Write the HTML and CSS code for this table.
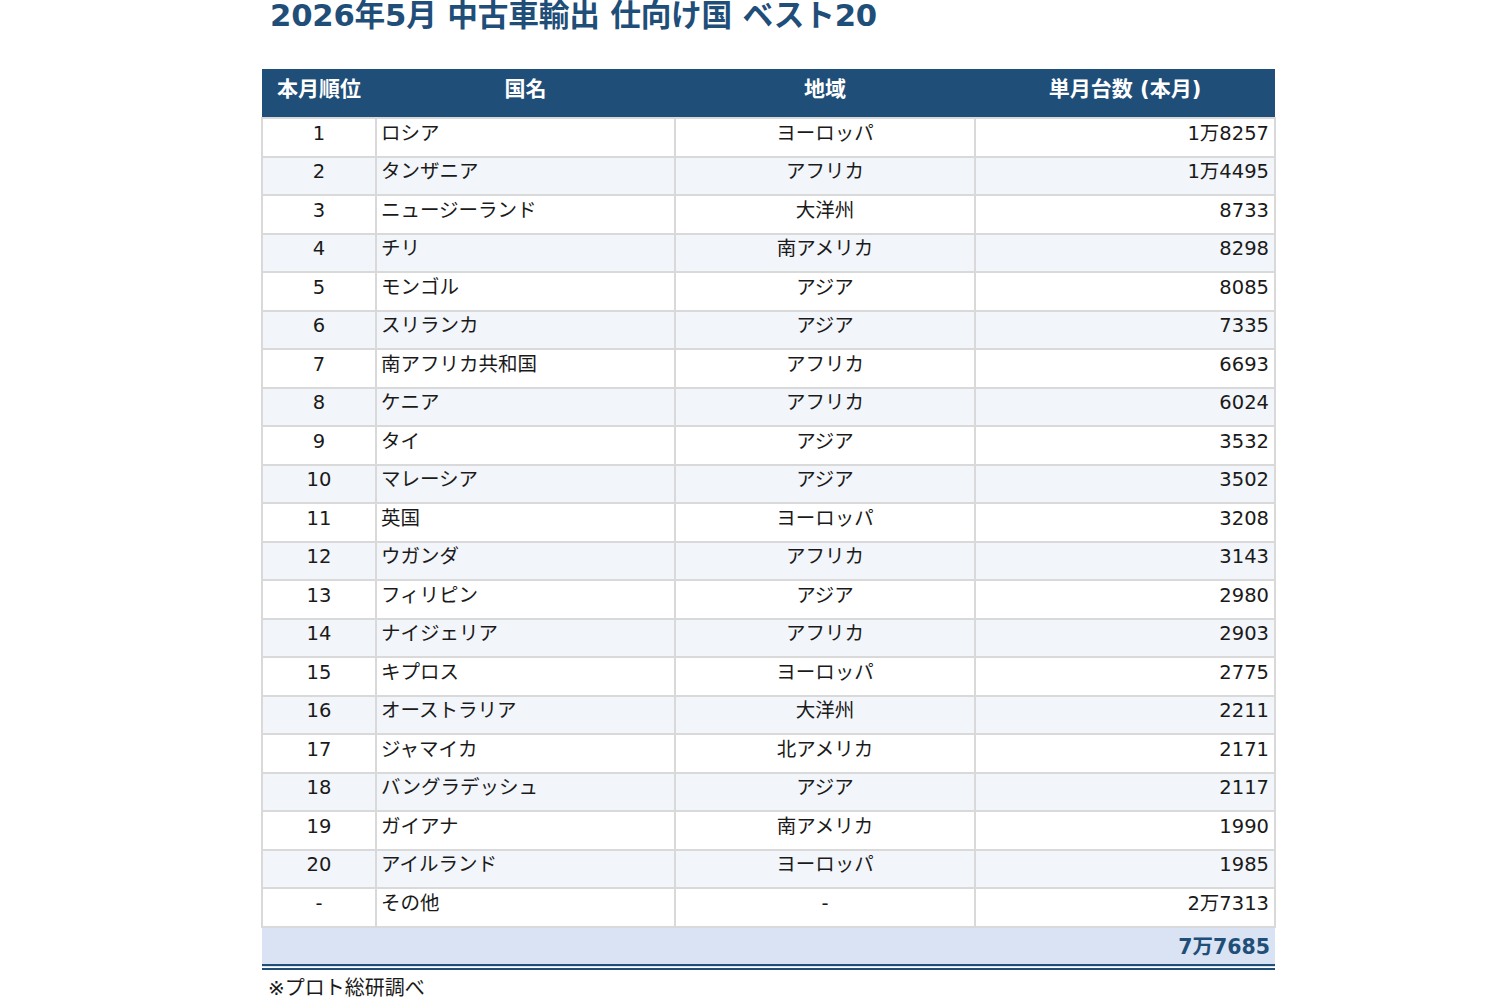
FILE: index.html
```html
<!DOCTYPE html>
<html lang="ja">
<head>
<meta charset="utf-8">
<link rel="stylesheet" href="styles.css">
</head>
<body>
<div class="page">
  <h1 class="title">2026年5月 中古車輸出 仕向け国 ベスト20</h1>
  <table class="rank">
    <colgroup>
      <col class="c1"><col class="c2"><col class="c3"><col class="c4">
    </colgroup>
    <thead>
      <tr><th>本月順位</th><th>国名</th><th>地域</th><th>単月台数 (本月)</th></tr>
    </thead>
    <tbody>
      <tr><td class="n">1</td><td class="l">ロシア</td><td class="m">ヨーロッパ</td><td class="r">1万8257</td></tr>
      <tr><td class="n">2</td><td class="l">タンザニア</td><td class="m">アフリカ</td><td class="r">1万4495</td></tr>
      <tr><td class="n">3</td><td class="l">ニュージーランド</td><td class="m">大洋州</td><td class="r">8733</td></tr>
      <tr><td class="n">4</td><td class="l">チリ</td><td class="m">南アメリカ</td><td class="r">8298</td></tr>
      <tr><td class="n">5</td><td class="l">モンゴル</td><td class="m">アジア</td><td class="r">8085</td></tr>
      <tr><td class="n">6</td><td class="l">スリランカ</td><td class="m">アジア</td><td class="r">7335</td></tr>
      <tr><td class="n">7</td><td class="l">南アフリカ共和国</td><td class="m">アフリカ</td><td class="r">6693</td></tr>
      <tr><td class="n">8</td><td class="l">ケニア</td><td class="m">アフリカ</td><td class="r">6024</td></tr>
      <tr><td class="n">9</td><td class="l">タイ</td><td class="m">アジア</td><td class="r">3532</td></tr>
      <tr><td class="n">10</td><td class="l">マレーシア</td><td class="m">アジア</td><td class="r">3502</td></tr>
      <tr><td class="n">11</td><td class="l">英国</td><td class="m">ヨーロッパ</td><td class="r">3208</td></tr>
      <tr><td class="n">12</td><td class="l">ウガンダ</td><td class="m">アフリカ</td><td class="r">3143</td></tr>
      <tr><td class="n">13</td><td class="l">フィリピン</td><td class="m">アジア</td><td class="r">2980</td></tr>
      <tr><td class="n">14</td><td class="l">ナイジェリア</td><td class="m">アフリカ</td><td class="r">2903</td></tr>
      <tr><td class="n">15</td><td class="l">キプロス</td><td class="m">ヨーロッパ</td><td class="r">2775</td></tr>
      <tr><td class="n">16</td><td class="l">オーストラリア</td><td class="m">大洋州</td><td class="r">2211</td></tr>
      <tr><td class="n">17</td><td class="l">ジャマイカ</td><td class="m">北アメリカ</td><td class="r">2171</td></tr>
      <tr><td class="n">18</td><td class="l">バングラデッシュ</td><td class="m">アジア</td><td class="r">2117</td></tr>
      <tr><td class="n">19</td><td class="l">ガイアナ</td><td class="m">南アメリカ</td><td class="r">1990</td></tr>
      <tr><td class="n">20</td><td class="l">アイルランド</td><td class="m">ヨーロッパ</td><td class="r">1985</td></tr>
      <tr><td class="n">-</td><td class="l">その他</td><td class="m">-</td><td class="r">2万7313</td></tr>
    </tbody>
    <tfoot>
      <tr><td colspan="4" class="total">7万7685</td></tr>
    </tfoot>
  </table>
  <p class="note">※プロト総研調べ</p>
</div>
</body>
</html>
```
FILE: styles.css
```css
html, body {
  margin: 0;
  padding: 0;
  background: #ffffff;
}
body {
  font-family: "DejaVu Sans", "Noto Sans CJK JP", sans-serif;
  color: #1a1a1a;
}
.page {
  width: 1014px;
  margin-left: 261px;
  display: flex;
  flex-direction: column;
}
.title {
  margin: 0;
  padding-left: 9px;
  height: 69px;
  font-size: 30.7px;
  line-height: 32px;
  font-weight: bold;
  color: #1f4e79;
  letter-spacing: -0.2px;
}
.rank {
  width: 1014px;
  border-collapse: collapse;
  table-layout: fixed;
  font-size: 19.5px;
}
.c1 { width: 114px; }
.c2 { width: 299px; }
.c3 { width: 300px; }
.c4 { width: 300px; }
.rank th {
  background: #1f4e79;
  color: #ffffff;
  font-weight: bold;
  height: 40px;
  padding: 0 0 8px;
  font-size: 21px;
  line-height: 24px;
  border: none;
}
.rank tbody td {
  border: 2px solid #d9d9d9;
  height: 29.5px;
  padding: 0 4px 7px;
  line-height: 20px;
}
.rank tbody tr:nth-child(even) td {
  background: #f2f5f9;
}
.n, .m { text-align: center; }
.l { text-align: left; }
.r { text-align: right; }
.rank tbody td.r { padding-right: 5px; }
.rank tfoot td {
  background: #dae3f3;
  border-top: 2px solid #1f4e79;
  border-bottom: 6px double #1f4e79;
  height: 34px;
  padding: 0 5px 2px;
  text-align: right;
  font-weight: bold;
  color: #1f4e79;
  font-size: 20.5px;
}
.note {
  margin: 6px 0 0 7px;
  font-size: 20px;
  line-height: 24px;
  font-weight: normal;
  color: #1a1a1a;
}
```
